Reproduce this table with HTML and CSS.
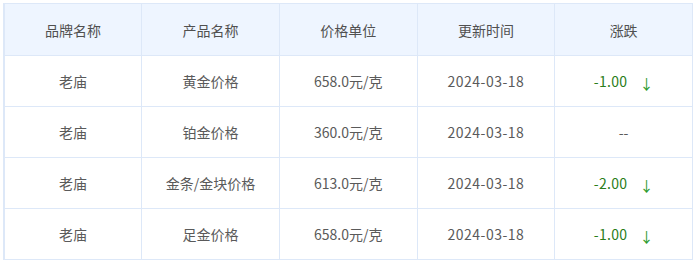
FILE: index.html
```html
<!DOCTYPE html>
<html lang="zh">
<head>
<meta charset="utf-8">
<link rel="stylesheet" href="styles.css">
</head>
<body>
<div class="wrap">
<table class="price">
  <thead>
    <tr><th>品牌名称</th><th>产品名称</th><th>价格单位</th><th>更新时间</th><th>涨跌</th></tr>
  </thead>
  <tbody>
    <tr><td>老庙</td><td>黄金价格</td><td>658.0元/克</td><td class="num">2024-03-18</td><td><span class="down">-1.00</span><span class="arrow">↓</span></td></tr>
    <tr><td>老庙</td><td>铂金价格</td><td>360.0元/克</td><td class="num">2024-03-18</td><td>--</td></tr>
    <tr><td>老庙</td><td>金条/金块价格</td><td>613.0元/克</td><td class="num">2024-03-18</td><td><span class="down">-2.00</span><span class="arrow">↓</span></td></tr>
    <tr><td>老庙</td><td>足金价格</td><td>658.0元/克</td><td class="num">2024-03-18</td><td><span class="down">-1.00</span><span class="arrow">↓</span></td></tr>
  </tbody>
</table>
</div>
</body>
</html>
```
FILE: styles.css
```css
html, body {
  margin: 0;
  padding: 0;
  background: #ffffff;
}
.wrap {
  padding: 3px 0 0 3px;
}
.price {
  width: 690px;
  border-collapse: collapse;
  table-layout: fixed;
  border-left: 2px solid #dde8f8;
  font-family: "Microsoft YaHei", "Noto Sans CJK SC", "Noto Sans", sans-serif;
  font-size: 14px;
  color: #5a5a5a;
}
.price th, .price td {
  border: 1px solid #dde8f8;
  text-align: center;
  padding: 0;
  height: 50px;
  font-weight: normal;
}
.price th {
  background: #eef5ff;
  height: 51px;
  color: #505050;
}
.num {
  letter-spacing: 0.5px;
}
.down {
  color: #2a7d1a;
  letter-spacing: 0.3px;
}
.arrow {
  color: #2a9a2a;
  margin-left: 12px;
  display: inline-block;
  transform: translateY(2px);
}
```
